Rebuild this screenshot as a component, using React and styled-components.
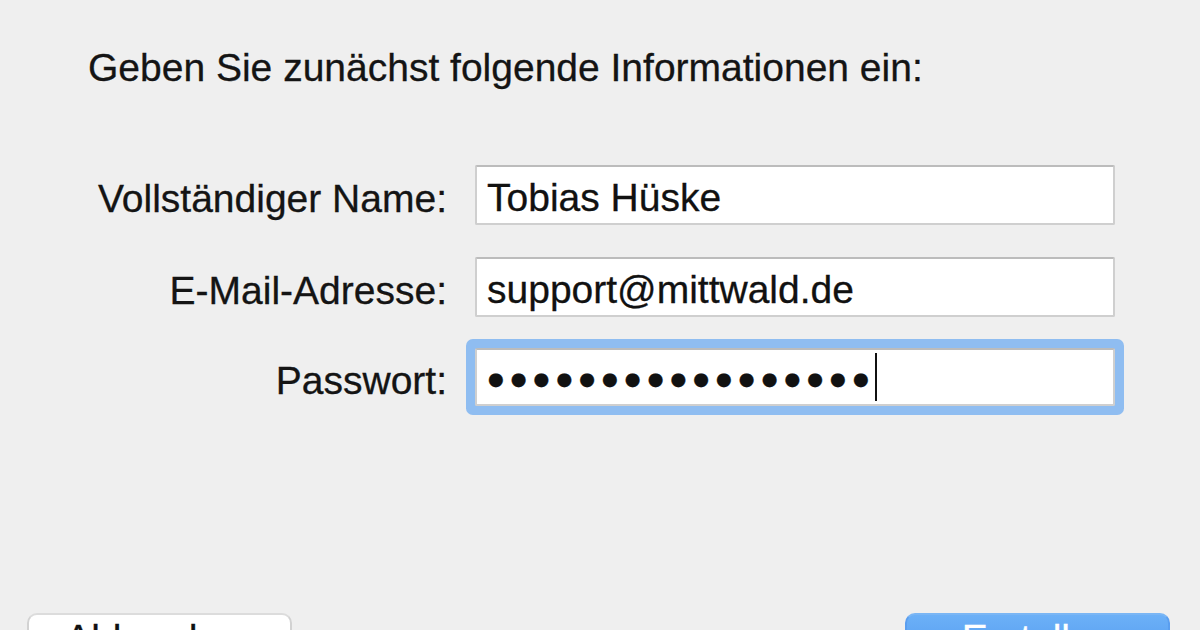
import React from "react";
import styled, { createGlobalStyle } from "styled-components";

const GlobalStyle = createGlobalStyle`
  html, body {
    margin: 0;
    padding: 0;
    background: #efefef;
  }
  body {
    font-family: "Liberation Sans", Arial, Helvetica, sans-serif;
    color: #141414;
    -webkit-text-stroke: 0.3px currentColor;
  }
`;

const Sheet = styled.div`
  width: 1200px;
  height: 630px;
  overflow: hidden;
  display: flex;
  flex-direction: column;
  background: #efefef;
`;

const Intro = styled.p`
  margin: 0;
  padding: 46px 0 0 88px;
  font-size: 39px;
  line-height: 44px;
`;

const Form = styled.div`
  display: grid;
  grid-template-columns: 447px 640px;
  column-gap: 28px;
  margin-top: 75px;
`;

const Label = styled.label`
  display: flex;
  align-items: center;
  justify-content: flex-end;
  box-sizing: border-box;
  height: 60px;
  padding-top: 8px;
  font-size: 39px;
  margin-top: ${(p) => p.$gap || 0}px;
`;

const Field = styled.div`
  box-sizing: border-box;
  height: ${(p) => (p.$focused ? 58 : 60)}px;
  margin-top: ${(p) => p.$gap || 0}px;
  background: #fff;
  border: 2px solid #cfcfcf;
  border-top-color: #bcbcbc;
  border-radius: 2px;
  display: flex;
  align-items: center;
  padding: 6px 0 0 10px;
  font-size: 39px;
  color: #111;
  box-shadow: ${(p) => (p.$focused ? "0 0 0 9px #8fbdf1" : "none")};
`;

const Dots = styled.span`
  font-family: "DejaVu Sans", sans-serif;
  font-size: 18px;
  letter-spacing: 7.1px;
  margin-left: 1px;
  margin-top: -4px;
`;

const Caret = styled.span`
  display: inline-block;
  width: 2px;
  height: 48px;
  background: #111;
  margin: -6px 0 0 -1px;
`;

const Footer = styled.div`
  display: flex;
  justify-content: space-between;
  padding: 0 30px 0 27px;
  margin-top: 206px;
`;

const Button = styled.div`
  box-sizing: border-box;
  width: 265px;
  height: 60px;
  border-radius: 10px;
  display: flex;
  justify-content: center;
  padding-top: 2px;
  font-size: 39px;
  line-height: 44px;
  background: ${(p) =>
    p.$primary ? "linear-gradient(#6cb0f7, #4b95ee)" : "#fff"};
  color: ${(p) => (p.$primary ? "#fff" : "#111")};
  border: 2px solid ${(p) => (p.$primary ? "#5a9eef" : "#d2d2d2")};
  border-top-color: ${(p) => (p.$primary ? "#7ab6f5" : "#dcdcdc")};
`;

export default function App() {
  return (
    <>
      <GlobalStyle />
      <Sheet>
        <Intro>Geben Sie zunächst folgende Informationen ein:</Intro>
        <Form>
          <Label>Vollständiger Name:</Label>
          <Field>Tobias Hüske</Field>
          <Label $gap={32}>E-Mail-Adresse:</Label>
          <Field $gap={32}>support@mittwald.de</Field>
          <Label $gap={30}>Passwort:</Label>
          <Field $gap={31} $focused>
            <Dots>{"●".repeat(17)}</Dots>
            <Caret />
          </Field>
        </Form>
        <Footer>
          <Button>Abbrechen</Button>
          <Button $primary>Erstellen</Button>
        </Footer>
      </Sheet>
    </>
  );
}
